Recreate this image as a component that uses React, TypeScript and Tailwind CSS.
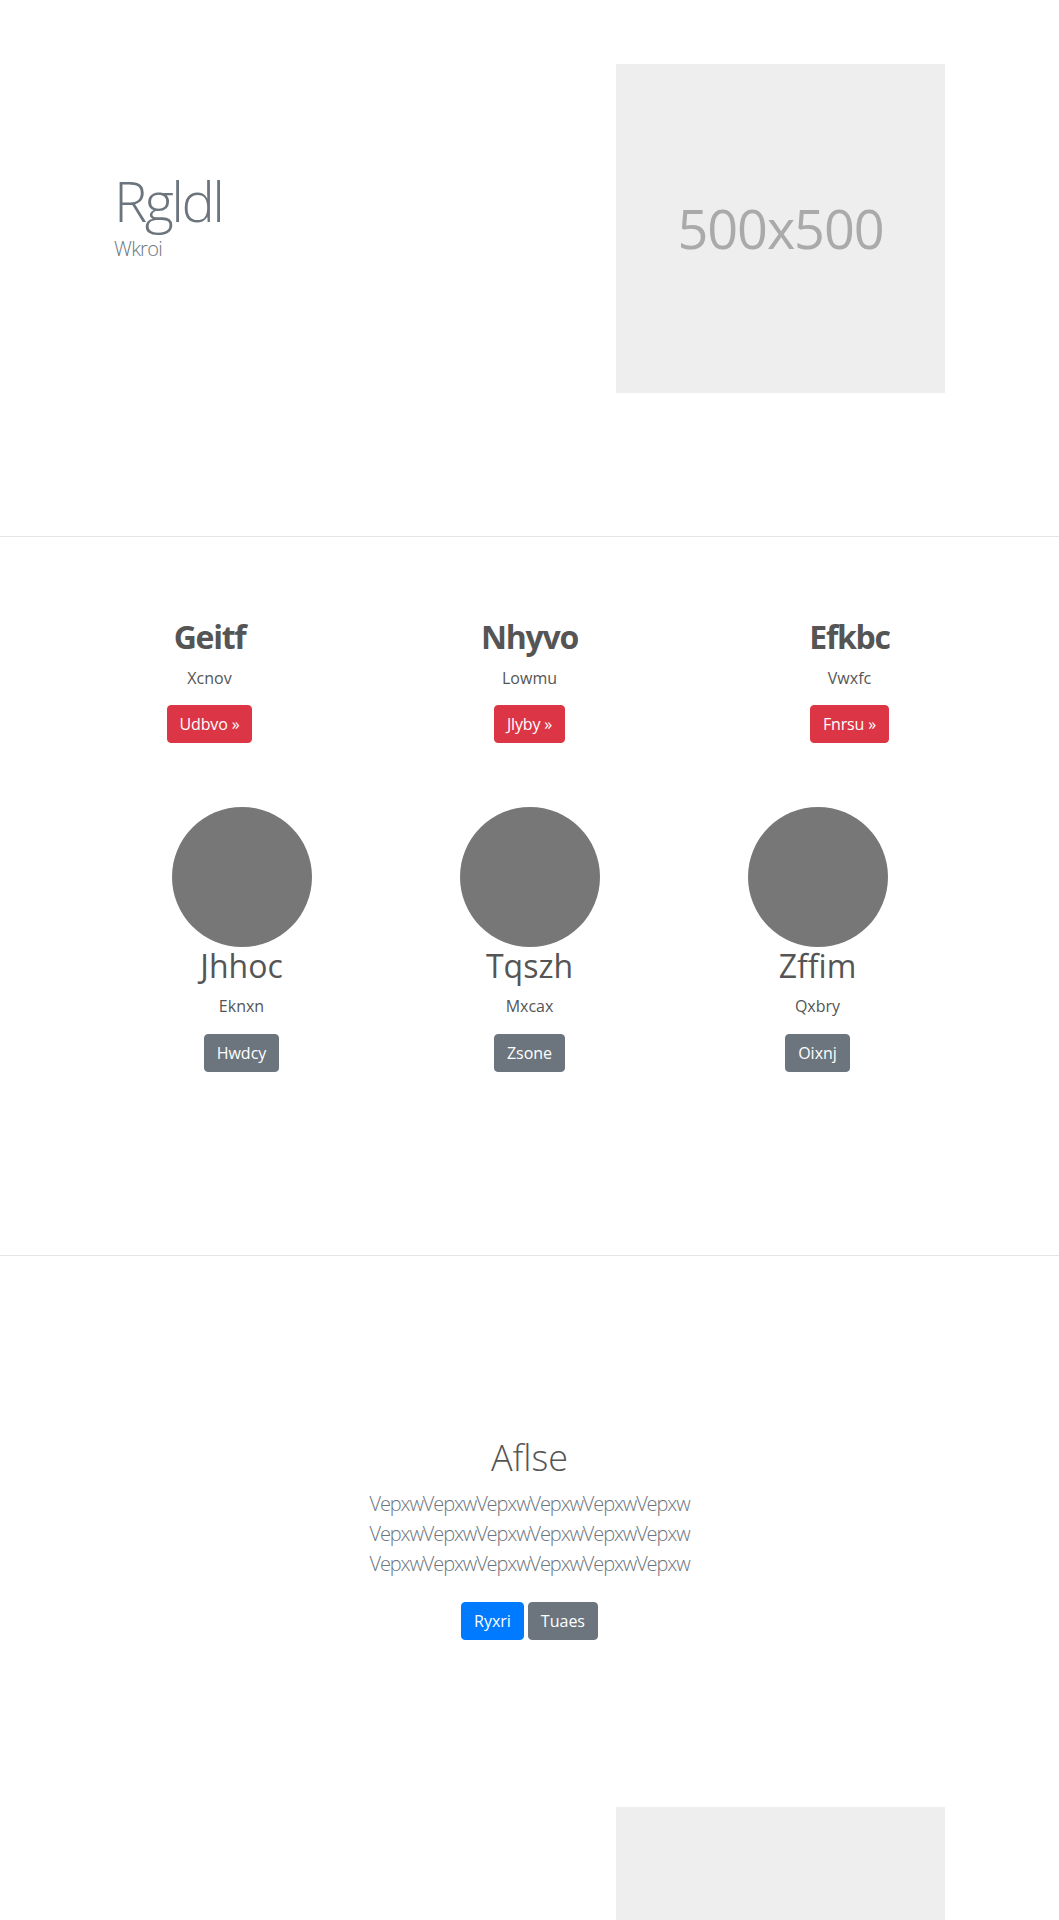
import React from "react";

const font = { fontFamily: '"Open Sans", "Noto Sans", "Liberation Sans", sans-serif' };

function RedCard({ title, text, btn }: { title: string; text: string; btn: string }) {
  return (
    <div className="flex flex-col items-center text-center">
      <h2 className="text-[32px] leading-[1.2] font-bold tracking-[-0.04em] text-[#555] mb-[10px]">{title}</h2>
      <p className="text-[16px] leading-[24px] text-[#555] mb-[15px]">{text}</p>
      <button className="bg-[#dc3545] text-white text-[16px] leading-[24px] px-3 py-[6px] rounded border border-[#dc3545] tracking-[-0.01em]">
        {btn} »
      </button>
    </div>
  );
}

function CircleCard({ title, text, btn }: { title: string; text: string; btn: string }) {
  return (
    <div className="flex flex-col items-center text-center">
      <div className="w-[140px] h-[140px] rounded-full bg-[#777]" />
      <h2 className="text-[32px] leading-[1.2] font-normal text-[#555] mb-2">{title}</h2>
      <p className="text-[16px] leading-[24px] text-[#555] mb-4">{text}</p>
      <button className="bg-[#6c757d] text-white text-[16px] leading-[24px] px-3 py-[6px] rounded border border-[#6c757d]">
        {btn}
      </button>
    </div>
  );
}

export default function App() {
  return (
    <div className="bg-white w-[1059px] overflow-hidden" style={font}>
      {/* Hero */}
      <section className="h-[537px] border-b border-[#e5e5e5] pt-[64px]">
        <div className="flex">
          <div className="w-[616px] pl-[114px] pt-[103px]">
            <h1 className="text-[56px] leading-[1.2] font-light tracking-[-0.045em] text-[#6c757d]">Rgldl</h1>
            <p className="text-[20px] leading-[30px] font-light tracking-[-0.035em] text-[#6c757d]">Wkroi</p>
          </div>
          <div className="w-[329px] h-[329px] bg-[#eeeeee] flex items-center justify-center">
            <span className="text-[54px] text-[#aaaaaa] font-normal tracking-[-0.02em]">500x500</span>
          </div>
        </div>
      </section>

      {/* Features */}
      <section className="h-[719px] border-b border-[#e5e5e5] pt-[81px]">
        <div className="w-[960px] mx-auto grid grid-cols-3">
          <RedCard title="Geitf" text="Xcnov" btn="Udbvo" />
          <RedCard title="Nhyvo" text="Lowmu" btn="Jlyby" />
          <RedCard title="Efkbc" text="Vwxfc" btn="Fnrsu" />
        </div>
        <div className="w-[864px] mx-auto grid grid-cols-3 mt-[64px]">
          <CircleCard title="Jhhoc" text="Eknxn" btn="Hwdcy" />
          <CircleCard title="Tqszh" text="Mxcax" btn="Zsone" />
          <CircleCard title="Zffim" text="Qxbry" btn="Oixnj" />
        </div>
      </section>

      {/* Jumbotron */}
      <section className="h-[487px] pt-[180px] flex flex-col items-center text-center">
        <h1 className="text-[36px] leading-[1.2] font-light text-[#555] mb-[10px]">Aflse</h1>
        <p className="text-[20px] leading-[30px] font-light tracking-[-0.055em] text-[#6c757d] mb-[15px]">
          <span className="block">VepxwVepxwVepxwVepxwVepxwVepxw</span>
          <span className="block">VepxwVepxwVepxwVepxwVepxwVepxw</span>
          <span className="block">VepxwVepxwVepxwVepxwVepxwVepxw</span>
        </p>
        <div className="flex gap-1 mt-2">
          <button className="bg-[#007bff] text-white text-[16px] leading-[24px] px-3 py-[6px] rounded border border-[#007bff]">
            Ryxri
          </button>
          <button className="bg-[#6c757d] text-white text-[16px] leading-[24px] px-3 py-[6px] rounded border border-[#6c757d]">
            Tuaes
          </button>
        </div>
      </section>

      {/* Next hero (cut off by the viewport) */}
      <section className="h-[177px] pt-[64px] overflow-hidden">
        <div className="flex">
          <div className="w-[616px]" />
          <div className="w-[329px] h-[329px] bg-[#eeeeee]" />
        </div>
      </section>
    </div>
  );
}
